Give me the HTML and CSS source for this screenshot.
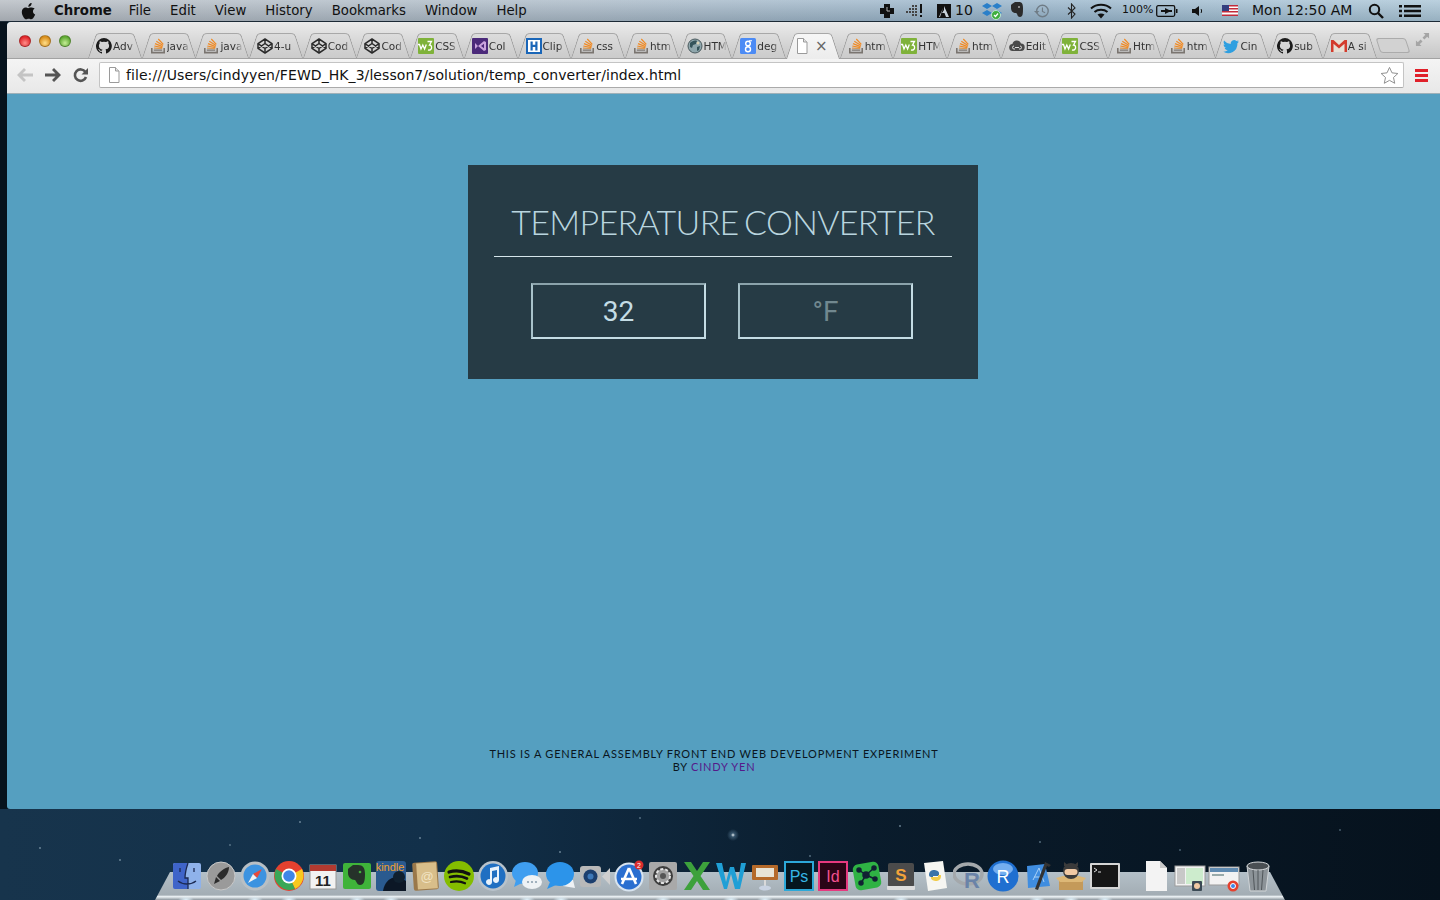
FILE: index.html
```html
<!DOCTYPE html>
<html lang="en">
<head>
    <meta charset="UTF-8">
    <title>Temperature Converter</title>
    <link rel="stylesheet" href="styles.css">
</head>
<body>
    <svg class="sprites" width="0" height="0">
        <symbol id="i-apple" viewBox="0 0 16 18"><path d="M11.6 1c.1 1.1-.3 2-.9 2.700-.6.7-1.500 1.200-2.400 1.100-.1-1 .4-2 .9-2.600C9.800 1.500 10.800 1 11.600 1zM14.700 6.500c-1.100.7-1.700 1.700-1.700 2.900 0 1.400.8 2.500 2.200 3.100-.4 1.100-.9 2.100-1.600 3.100-.7 1-1.400 1.700-2.400 1.700-.9 0-1.300-.6-2.500-.6s-1.700.6-2.500.6c-1 0-1.800-.9-2.500-1.900C2.500 13.800 1.800 11.900 1.800 10.100c0-3 1.900-4.600 3.800-4.600 1 0 1.900.7 2.500.7.600 0 1.600-.8 2.800-.7.900 0 2.600.3 3.800 1z"/></symbol>
        <symbol id="i-github" viewBox="0 0 16 16"><path fill="#1b1b1b" d="M8 0a8 8 0 0 0-2.500 15.600c.4.100.5-.2.500-.4v-1.400c-2.200.5-2.700-1-2.700-1-.4-.9-.9-1.200-.9-1.200-.7-.5.100-.5.100-.5.800.1 1.200.8 1.200.8.700 1.200 1.900.9 2.300.7.100-.5.300-.9.500-1.100-1.800-.2-3.600-.9-3.600-4 0-.9.300-1.600.8-2.100-.1-.2-.4-1 .1-2.100 0 0 .7-.2 2.200.8a7.600 7.600 0 0 1 4 0c1.500-1 2.200-.8 2.200-.8.400 1.100.2 1.900.1 2.100.5.600.8 1.300.8 2.100 0 3.100-1.900 3.700-3.700 3.900.3.300.6.700.6 1.500v2.200c0 .2.100.5.600.4A8 8 0 0 0 8 0z"/></symbol>
        <symbol id="i-so" viewBox="0 0 16 16"><path fill="#7a7570" d="M1 10h1.600v3.800h10.800V10H15v5.500H1z"/><path fill="#7a7570" d="M3.800 11.600h8.400v1.200H3.800z"/><g fill="none" stroke="#f08a24" stroke-width="1.200"><path stroke="#d69a58" d="M4 10.200l8.200.4"/><path d="M4.300 8l8 1.600"/><path d="M5 5.600l7.600 3"/><path d="M6.300 3.300l6.700 4.200"/><path d="M8.300 1l5 5.400"/></g></symbol>
        <symbol id="i-codepen" viewBox="0 0 16 16"><g fill="none" stroke="#2a2a2a" stroke-width="1.500" stroke-linejoin="round"><path d="M8 1l7 4.600v4.800L8 15l-7-4.600V5.600z"/><path d="M8 1v4.500M8 10.500V15M1 5.600L8 10.500l7-4.900M1 10.400L8 5.500l7 4.900"/></g></symbol>
        <symbol id="i-w3" viewBox="0 0 16 16"><rect width="16" height="16" rx="1" fill="#7fb23a"/><path fill="none" stroke="#fff" stroke-width="1.300" d="M0 6.500h1.500l1.500 4.500 1.800-4 1.800 4 1.700-4.500M9.500 3.500h4l-2 3.500c3 0 3 6-1.500 5"/></symbol>
        <symbol id="i-vs" viewBox="0 0 16 16"><rect width="16" height="16" rx="1" fill="#4b2a7a"/><path fill="#c9a3dd" d="M3 5l3 3-3 3V5zm3 3l6-5 2 1v8l-2 1-6-5zm6-2.200L9 8l3 2.200V5.800z"/></symbol>
        <symbol id="i-h" viewBox="0 0 16 16"><rect width="16" height="16" fill="#1a66b8"/><rect x="2" y="2" width="12" height="12" fill="#fff"/><path fill="#1a66b8" d="M4.500 3.500h2.200v3.300h2.600V3.500h2.200v9H9.300V8.900H6.700v3.600H4.500z"/></symbol>
        <symbol id="i-globe" viewBox="0 0 16 16"><circle cx="8" cy="8" r="7" fill="#8fa6ac" stroke="#4a5a5e"/><path fill="#34535a" d="M3 5c2-2 5-3 7-2l-1 3-3 1-1 3-2-1zM10 9l3-1-1 4-2 1z"/><circle cx="11" cy="5" r="1.500" fill="#d9d2b6"/></symbol>
        <symbol id="i-google" viewBox="0 0 16 16"><rect width="16" height="16" rx="1.500" fill="#4c8bf5"/><circle cx="8" cy="5.500" r="2.300" fill="none" stroke="#fff" stroke-width="1.400"/><circle cx="8" cy="11.300" r="2.500" fill="none" stroke="#fff" stroke-width="1.400"/><path fill="#fff" d="M9 2.200h3v1H9z"/></symbol>
        <symbol id="i-doc" viewBox="0 0 14 16"><path fill="#fff" stroke="#9a9a9a" d="M2.500.5h6l3.500 3.500v11.500H2.500z"/><path fill="#e3e3e3" stroke="#9a9a9a" d="M8.500.5V4H12"/></symbol>
        <symbol id="i-cloud" viewBox="0 0 16 16"><path fill="#4a4a4a" d="M4 13a3.500 3.500 0 0 1-.6-7A4.500 4.500 0 0 1 12 5.600 3.700 3.700 0 0 1 12 13z"/><path fill="none" stroke="#ddd" stroke-width="1" d="M6 9.500h4M5 8a1.500 1.500 0 0 0 0 3h1M11 8a1.500 1.500 0 0 1 0 3h-1"/></symbol>
        <symbol id="i-twitter" viewBox="0 0 16 16"><path fill="#2f9fe0" d="M16 3.500c-.6.300-1.200.4-1.900.5.700-.4 1.200-1 1.400-1.800-.6.400-1.300.6-2.100.8A3.300 3.300 0 0 0 7.800 6C5.100 5.900 2.700 4.600 1.100 2.600c-.9 1.500-.4 3.400 1 4.400-.5 0-1-.2-1.500-.4 0 1.600 1.100 3 2.600 3.300-.5.100-1 .2-1.500.1.400 1.300 1.600 2.200 3.100 2.300A6.600 6.600 0 0 1 0 13.600 9.300 9.300 0 0 0 14.400 5.300c.6-.5 1.200-1.100 1.600-1.800z"/></symbol>
        <symbol id="i-gmail" viewBox="0 0 16 16"><rect y="2" width="16" height="12" fill="#e6e0d6"/><path fill="#d33b2c" d="M0 2h2.500L8 7l5.500-5H16v12h-2.500V5.800L8 10.500 2.500 5.800V14H0z"/></symbol>
    </svg>

    <div class="menubar">
        <svg class="apple"><use href="#i-apple"/></svg>
        <nav class="menu">
            <span class="menu-app">Chrome</span>
            <span>File</span>
            <span>Edit</span>
            <span>View</span>
            <span>History</span>
            <span>Bookmarks</span>
            <span>Window</span>
            <span>Help</span>
        </nav>
        <div class="tray">
            <svg class="tray-icon tray-plus" viewBox="0 0 16 16"><path fill="#111" d="M5 1h6v4h4v6h-4v4H5v-4H1V5h4z"/><path stroke="#bbb" d="M8 4v4h3"/></svg>
            <svg class="tray-icon tray-grid" viewBox="0 0 20 16"><g fill="#444"><rect x="1" y="8" width="2" height="2"/><rect x="4" y="5" width="2" height="2"/><rect x="4" y="8" width="2" height="2"/><rect x="7" y="2" width="2" height="2"/><rect x="7" y="5" width="2" height="2"/><rect x="7" y="8" width="2" height="2"/><rect x="7" y="11" width="2" height="2"/><rect x="10" y="2" width="2" height="2"/><rect x="10" y="5" width="2" height="2"/><rect x="10" y="8" width="2" height="2"/><rect x="10" y="11" width="2" height="2"/></g><path fill="#111" d="M15 1h2v9h-2zM15 12h2v2h-2z"/></svg>
            <svg class="tray-icon tray-adobe" viewBox="0 0 16 16"><path fill="#111" d="M1 1h14v14H1z"/><path fill="#c8d2da" d="M8 3l5 11h-3L8.500 10H6L8 7zM3 14L7 5 4 14z"/></svg>
            <span class="tray-num">10</span>
            <svg class="tray-icon tray-dropbox" viewBox="0 0 20 18"><path fill="#2a7fc9" d="M5 1l5 3-5 3-5-3zM15 1l5 3-5 3-5-3zM5 8l5 3-5 3-5-3zM15 8l5 3-5 3-5-3z"/><circle cx="14" cy="13" r="4.500" fill="#3fae3f" stroke="#dfe" stroke-width=".7"/><path stroke="#fff" fill="none" stroke-width="1.200" d="M12 13l1.500 1.500 2.500-3"/></svg>
            <svg class="tray-icon tray-ever" viewBox="0 0 16 18"><path fill="#2b2b2b" d="M3 3l3-2h4c3 0 4 2 4 6 0 5 0 9-3 9-3 0-2-3-4-4-3 0-5-2-5-5V4z"/><circle cx="10" cy="6" r="1" fill="#aaa"/></svg>
            <svg class="tray-icon tray-clock" viewBox="0 0 18 18"><circle cx="9.500" cy="9" r="6.500" fill="none" stroke="#6f7c86" stroke-width="1.500"/><path fill="none" stroke="#6f7c86" stroke-width="1.300" d="M9.500 5v4.500l3 1.500"/><path fill="#6f7c86" d="M0 9h6l-3 3z"/></svg>
            <svg class="tray-icon tray-bt" viewBox="0 0 10 16"><path fill="none" stroke="#222" stroke-width="1.100" d="M1 4.500l7 6.500-3.500 4V1L8 5 1 11.500"/></svg>
            <svg class="tray-icon tray-wifi" viewBox="0 0 22 16"><g fill="none" stroke="#111" stroke-width="2"><path d="M1 5.500c5.500-5 14.500-5 20 0"/><path d="M4.500 9c3.500-3 9.500-3 13 0"/></g><path fill="#111" d="M7.500 11.500c2-1.500 5-1.500 7 0L11 15.500z"/></svg>
            <span class="tray-pct">100%</span>
            <svg class="tray-icon tray-batt" viewBox="0 0 22 12"><rect x=".7" y=".7" width="18" height="10.600" rx="1.500" fill="none" stroke="#111" stroke-width="1.300"/><rect x="20" y="4" width="1.500" height="4" fill="#111"/><path fill="#111" d="M5 5h4V3l4 2h3v2h-3l-4 2V7H5z"/></svg>
            <svg class="tray-icon tray-vol" viewBox="0 0 14 14"><path fill="#111" d="M1 5h3l4-3v10L4 9H1z"/><path fill="none" stroke="#111" d="M10 5c.8 1 .8 3 0 4"/></svg>
            <svg class="tray-icon tray-flag" viewBox="0 0 16 11"><rect width="16" height="11" fill="#fff"/><path fill="#c22b3a" d="M0 0h16v1.500H0zM0 3h16v1.500H0zM0 6h16v1.500H0zM0 9.500h16V11H0z"/><rect width="7" height="6" fill="#333e7e"/></svg>
            <span class="tray-time">Mon 12:50 AM</span>
            <svg class="tray-icon tray-search" viewBox="0 0 16 16"><circle cx="6.500" cy="6.500" r="4.700" fill="none" stroke="#111" stroke-width="2"/><path stroke="#111" stroke-width="2.400" d="M10 10l5 5"/></svg>
            <svg class="tray-icon tray-list" viewBox="0 0 22 14"><path fill="#111" d="M0 1h3v2.400H0zM5 1h17v2.400H5zM0 5.800h3v2.400H0zM5 5.800h17v2.400H5zM0 10.600h3V13H0zM5 10.600h17V13H5z"/></svg>
        </div>
    </div>

    <div class="desktop">
        <div class="window">
            <div class="tabstrip">
                <div class="lights">
                    <span class="light light-red"></span>
                    <span class="light light-yellow"></span>
                    <span class="light light-green"></span>
                </div>
                <div class="tabs">
                    <div class="tab"><svg class="fav"><use href="#i-github"/></svg><span class="tab-title">Adv</span></div>
                    <div class="tab"><svg class="fav"><use href="#i-so"/></svg><span class="tab-title">java</span></div>
                    <div class="tab"><svg class="fav"><use href="#i-so"/></svg><span class="tab-title">java</span></div>
                    <div class="tab"><svg class="fav"><use href="#i-codepen"/></svg><span class="tab-title">4-u</span></div>
                    <div class="tab"><svg class="fav"><use href="#i-codepen"/></svg><span class="tab-title">Cod</span></div>
                    <div class="tab"><svg class="fav"><use href="#i-codepen"/></svg><span class="tab-title">Cod</span></div>
                    <div class="tab"><svg class="fav"><use href="#i-w3"/></svg><span class="tab-title">CSS</span></div>
                    <div class="tab"><svg class="fav"><use href="#i-vs"/></svg><span class="tab-title">Col</span></div>
                    <div class="tab"><svg class="fav"><use href="#i-h"/></svg><span class="tab-title">Clip</span></div>
                    <div class="tab"><svg class="fav"><use href="#i-so"/></svg><span class="tab-title">css</span></div>
                    <div class="tab"><svg class="fav"><use href="#i-so"/></svg><span class="tab-title">htm</span></div>
                    <div class="tab"><svg class="fav"><use href="#i-globe"/></svg><span class="tab-title">HTM</span></div>
                    <div class="tab"><svg class="fav"><use href="#i-google"/></svg><span class="tab-title">deg</span></div>
                    <div class="tab tab-active"><svg class="fav"><use href="#i-doc"/></svg><span class="tab-close">×</span></div>
                    <div class="tab"><svg class="fav"><use href="#i-so"/></svg><span class="tab-title">htm</span></div>
                    <div class="tab"><svg class="fav"><use href="#i-w3"/></svg><span class="tab-title">HTM</span></div>
                    <div class="tab"><svg class="fav"><use href="#i-so"/></svg><span class="tab-title">htm</span></div>
                    <div class="tab"><svg class="fav"><use href="#i-cloud"/></svg><span class="tab-title">Edit</span></div>
                    <div class="tab"><svg class="fav"><use href="#i-w3"/></svg><span class="tab-title">CSS</span></div>
                    <div class="tab"><svg class="fav"><use href="#i-so"/></svg><span class="tab-title">Htm</span></div>
                    <div class="tab"><svg class="fav"><use href="#i-so"/></svg><span class="tab-title">htm</span></div>
                    <div class="tab"><svg class="fav"><use href="#i-twitter"/></svg><span class="tab-title">Cin</span></div>
                    <div class="tab"><svg class="fav"><use href="#i-github"/></svg><span class="tab-title">sub</span></div>
                    <div class="tab"><svg class="fav"><use href="#i-gmail"/></svg><span class="tab-title">A si</span></div>
                </div>
                <div class="tab-new"></div>
                <svg class="fullscreen" viewBox="0 0 16 16"><path fill="#a5a5a5" d="M9 1h6v6l-2-2-3 3-2-2 3-3zM7 15H1V9l2 2 3-3 2 2-3 3z"/></svg>
            </div>
            <div class="toolbar">
                <svg class="nav-btn nav-back" viewBox="0 0 18 16"><path fill="#c4c4c4" d="M8 1l2 2-3.500 3.500H17v3H6.500L10 13l-2 2-7-7z"/></svg>
                <svg class="nav-btn nav-fwd" viewBox="0 0 18 16"><path fill="#555" d="M10 1L8 3l3.500 3.500H1v3h10.500L8 13l2 2 7-7z"/></svg>
                <svg class="nav-btn nav-reload" viewBox="0 0 16 16"><path fill="none" stroke="#555" stroke-width="2.600" d="M13 10a5.700 5.700 0 1 1-.6-5"/><path fill="#555" d="M15 1v6.500H8.500z"/></svg>
                <div class="urlbar">
                    <svg class="url-doc"><use href="#i-doc"/></svg>
                    <span class="url-text">file:///Users/cindyyen/FEWD_HK_3/lesson7/solution/temp_converter/index.html</span>
                    <svg class="url-star" viewBox="0 0 20 20"><path fill="#fff" stroke="#8a8a8a" d="M10 1.500l2.600 5.700 6.200.7-4.600 4.200 1.300 6.100L10 15.100l-5.500 3.100 1.300-6.100L1.200 7.900l6.200-.7z"/></svg>
                </div>
                <div class="hamburger"><span></span><span></span><span></span></div>
            </div>
            <main class="page">
                <section class="converter">
                    <h1>Temperature Converter</h1>
                    <form class="converter-form">
                        <input type="text" value="32">
                        <input type="text" placeholder="°F">
                    </form>
                </section>
                <footer class="credit">
                    This is a General Assembly Front End Web Development Experiment<br>
                    by <a href="#">Cindy Yen</a>
                </footer>
            </main>
        </div>
    </div>

    <div class="dock">
        <div class="dock-icons">
            <svg viewBox="0 0 32 32"><rect x="2" y="3" width="28" height="26" rx="2" fill="#8fb2ea"/><path fill="#3f64c9" d="M2 5a2 2 0 0 1 2-2h13c-2 6-3 10-3 15h3v11H4a2 2 0 0 1-2-2z"/><path fill="none" stroke="#1c2a52" stroke-width="1.300" d="M17 3c-2 6-3 10-3 15h3v11M9 8v4M23 8v4M7 21c5 4 13 4 18 0"/></svg>
            <svg viewBox="0 0 32 32"><circle cx="16" cy="16" r="14" fill="#9a9a9a"/><circle cx="16" cy="16" r="14" fill="none" stroke="#c9c9c9"/><path fill="#2c2c2c" d="M24 7c0 6-4 11-8 13l-4-4c2-4 7-8 12-9zM11 17l4 4-6 3z"/></svg>
            <svg viewBox="0 0 32 32"><circle cx="16" cy="16" r="14.500" fill="#b8bfc4"/><circle cx="16" cy="16" r="11.500" fill="#3c93e0"/><path fill="#e8493a" d="M23 9l-9 5 4 4z"/><path fill="#f2f2f2" d="M9 23l9-5-4-4z"/></svg>
            <svg viewBox="0 0 32 32"><circle cx="16" cy="16" r="15" fill="#e5412f"/><path fill="#f9c81e" d="M16 16L29 9a15 15 0 0 1-7 20z"/><path fill="#3aa757" d="M16 16l6 13A15 15 0 0 1 3 9z"/><circle cx="16" cy="16" r="7.500" fill="#fff"/><circle cx="16" cy="16" r="5.800" fill="#3f86e8"/></svg>
            <svg viewBox="0 0 32 32"><rect x="3" y="5" width="26" height="24" fill="#f2f2f2" stroke="#999"/><path fill="#b23a30" d="M3 5h26v6H3z"/><text x="16" y="26" class="dock-cal">11</text></svg>
            <svg viewBox="0 0 32 32"><rect x="2" y="3" width="28" height="26" rx="2" fill="#3fb33a"/><path fill="#26322a" d="M8 8l4-3h5c5 0 7 3 7 9 0 7-1 11-5 11-3 0-3-3-5-5-4 0-7-3-7-7V9z"/><circle cx="19" cy="12" r="1.300" fill="#3fb33a"/></svg>
            <svg viewBox="0 0 32 32"><rect x="1" y="1" width="30" height="30" rx="3" fill="#2a5a8f"/><path fill="#0c1726" d="M8 31c1-6 4-11 9-13 5-2 10 0 14 3v10z"/><circle cx="24" cy="17" r="6" fill="#10202f"/><text x="15" y="11" class="dock-kindle">kindle</text></svg>
            <svg viewBox="0 0 32 32"><rect x="4" y="2" width="25" height="28" rx="2" fill="#9a784a" transform="rotate(-4 16 16)"/><rect x="8" y="3" width="20" height="26" fill="#d8be8a" transform="rotate(-4 16 16)"/><text x="18" y="21" class="dock-at">@</text></svg>
            <svg viewBox="0 0 32 32"><circle cx="16" cy="16" r="15" fill="#84bd00"/><g fill="none" stroke="#111" stroke-linecap="round"><path stroke-width="3.200" d="M6 12c7-2 14-1 20 2"/><path stroke-width="2.700" d="M7 17c6-1.500 12-1 17 1.500"/><path stroke-width="2.200" d="M8 22c5-1 10-.7 14 1.300"/></g></svg>
            <svg viewBox="0 0 32 32"><circle cx="16" cy="16" r="15" fill="#b9c3cb"/><circle cx="16" cy="16" r="12.500" fill="#1f6fc2"/><path fill="#e8f2fb" d="M13 8l9-2v14a3 3 0 1 1-2-2.800V10l-5 1v11a3 3 0 1 1-2-2.800z"/></svg>
            <svg viewBox="0 0 32 32"><ellipse cx="14" cy="13" rx="13" ry="11" fill="#3f9ef0"/><path fill="#3f9ef0" d="M5 20l-2 7 8-4z"/><ellipse cx="21" cy="22" rx="10" ry="7" fill="#eef2f5"/><circle cx="17" cy="22" r="1.100" fill="#8ea2b2"/><circle cx="21" cy="22" r="1.100" fill="#8ea2b2"/><circle cx="25" cy="22" r="1.100" fill="#8ea2b2"/></svg>
            <svg viewBox="0 0 32 32"><path fill="#eef2f5" d="M18 20h10l2 8-12-2z"/><ellipse cx="15" cy="14" rx="14" ry="12" fill="#2c94ea"/><path fill="#2c94ea" d="M5 22l-3 7 9-4z"/></svg>
            <svg viewBox="0 0 32 32"><rect x="1" y="6" width="21" height="21" rx="3" fill="#b9b9b9"/><circle cx="11.500" cy="16.500" r="7" fill="#1d3f6e"/><circle cx="11.500" cy="16.500" r="3" fill="#3e78b8"/><path fill="#cfcfcf" d="M23 16.500L31 8v17z"/></svg>
            <svg viewBox="0 0 32 32"><circle cx="16" cy="17" r="14.500" fill="#d8e4ef"/><circle cx="16" cy="17" r="12.500" fill="#2a6fd0"/><path fill="none" stroke="#fff" stroke-width="2.600" d="M16 8l-7 16M16 8l7 16M8 19h16"/><circle cx="26" cy="5" r="4.500" fill="#d92c2c"/><text x="26" y="7.500" class="dock-badge">2</text></svg>
            <svg viewBox="0 0 32 32"><rect x="2" y="2" width="28" height="28" rx="2" fill="#a9a9a9"/><circle cx="16" cy="16" r="10" fill="#3d3d3d"/><circle cx="16" cy="16" r="7" fill="#a0a0a0" stroke="#e4e4e4" stroke-width="2" stroke-dasharray="3 2"/><circle cx="16" cy="16" r="3" fill="#555"/></svg>
            <svg viewBox="0 0 32 32"><path fill="#3da13c" d="M3 2h7l6 9 6-9h7L19.500 16 29 30h-7l-6-9-6 9H3l9.500-14z"/></svg>
            <svg viewBox="0 0 32 32"><path fill="#1f9fd6" d="M1 3h6l4 19 4-15h4l4 15 3-19h5l-6 26h-5l-4-15-4 15H9z"/></svg>
            <svg viewBox="0 0 32 32"><rect x="3" y="5" width="26" height="15" rx="1" fill="#b56a2a"/><rect x="7" y="8" width="18" height="9" fill="#e8e4d6"/><path fill="#d9d9d9" d="M15 20h2v7h-2z"/><ellipse cx="16" cy="28" rx="6" ry="2.500" fill="#c9d3e2"/></svg>
            <svg viewBox="0 0 32 32"><rect x="2" y="2" width="28" height="28" fill="#05161f" stroke="#2ca8d8" stroke-width="2"/><text x="16" y="22" class="dock-ps">Ps</text></svg>
            <svg viewBox="0 0 32 32"><rect x="2" y="2" width="28" height="28" fill="#2a0416" stroke="#e5397f" stroke-width="2"/><text x="16" y="22" class="dock-id">Id</text></svg>
            <svg viewBox="0 0 32 32"><rect x="3" y="3" width="26" height="26" rx="5" fill="#2fb344" transform="rotate(-10 16 16)"/><g fill="#123" stroke="#123" stroke-width="1.500"><circle cx="15" cy="15" r="3"/><circle cx="8" cy="10" r="2"/><circle cx="23" cy="8" r="2"/><circle cx="24" cy="19" r="2"/><circle cx="10" cy="23" r="2"/><path d="M15 15L8 10M15 15l8-7M15 15l9 4M15 15L10 23"/></g></svg>
            <svg viewBox="0 0 32 32"><rect x="3" y="3" width="26" height="24" rx="2" fill="#4b4b4b"/><path fill="#ddd" d="M2 26h28v3a1 1 0 0 1-1 1H3a1 1 0 0 1-1-1z"/><text x="16" y="21" class="dock-s">S</text></svg>
            <svg viewBox="0 0 32 32"><path fill="#f6f6f2" d="M5 3l19 -2 4 27-19 3z"/><path fill="#3a74a8" d="M10 15c0-4 3-5 5-5s5 1 5 3v3h-6v1h-2c-1 0-2-1-2-2z"/><path fill="#f2cc4a" d="M22 16c0 4-3 5-5 5s-5-1-5-3v-1h7v-2h2c1 0 1 0 1 1z"/></svg>
            <svg viewBox="0 0 32 32"><ellipse cx="15" cy="14" rx="14" ry="10" fill="none" stroke="#a4a8ab" stroke-width="3.500"/><text x="19" y="28" class="dock-r">R</text></svg>
            <svg viewBox="0 0 32 32"><circle cx="16" cy="16" r="15.500" fill="#1f6fd0"/><ellipse cx="16" cy="9" rx="10" ry="6" fill="#74aef0"/><text x="16" y="23" class="dock-r2">R</text></svg>
            <svg viewBox="0 0 32 32"><path fill="#3f8de0" d="M6 6l18-2 5 22-22 2z"/><path fill="none" stroke="#a8d0f7" d="M12 20l6-12 5 14M13 17h9"/><path fill="#333" d="M24 2l6 3-2 2-2-1-9 24-3-1 9-24z"/></svg>
            <svg viewBox="0 0 32 32"><path fill="#c49a5a" d="M4 20h24v10H4z"/><path fill="#ddb877" d="M1 18l7-2h16l7 2-4 4H5z"/><circle cx="16" cy="11" r="8" fill="#3b3b3b"/><path fill="#3b3b3b" d="M9 2l5 4H9zM23 2l-5 4h5z"/><rect x="9.500" y="9" width="13" height="6" rx="3" fill="#f0c9a4"/></svg>
            <svg viewBox="0 0 32 32"><rect x="1" y="3" width="30" height="26" rx="1" fill="#d5d5d5"/><rect x="3" y="5" width="26" height="22" fill="#161616"/><path fill="none" stroke="#ddd" d="M5 8l3 2-3 2M9 12h3"/></svg>
            <span class="dock-sep"></span>
            <svg viewBox="0 0 32 32"><path fill="#f3f3f3" d="M6 1h14l7 7v23H6z"/><path fill="#c9c9c9" d="M20 1v7h7z"/></svg>
            <svg viewBox="0 0 32 32"><rect x="1" y="6" width="30" height="20" fill="#f2f2f2" stroke="#9b9b9b"/><rect x="3" y="8" width="8" height="16" fill="#c8c8c8"/><rect x="12" y="8" width="17" height="16" fill="#cdeccd"/><rect x="18" y="21" width="10" height="10" rx="1" fill="#3b4a55"/><circle cx="23" cy="26" r="3" fill="#f0c9a4"/></svg>
            <svg viewBox="0 0 32 32"><rect x="1" y="7" width="30" height="18" fill="#f2f2f2" stroke="#9b9b9b"/><rect x="2" y="8" width="28" height="4" fill="#5f8ab0"/><rect x="4" y="14" width="12" height="2" fill="#9aa"/><circle cx="25" cy="26" r="5.500" fill="#e5412f"/><circle cx="25" cy="26" r="2.500" fill="#3f86e8" stroke="#fff"/></svg>
            <svg viewBox="0 0 32 32"><path fill="#8c9398" stroke="#cfd3d6" d="M5 6h22l-3 25H8z"/><ellipse cx="16" cy="6" rx="11" ry="4" fill="#4a4f53" stroke="#d6d9db"/><path stroke="#50565a" d="M11 10l1.500 20M16 10v20M21 10l-1.500 20"/></svg>
        </div>
    </div>
</body>
</html>
```

FILE: styles.css
```css
* {
    box-sizing: border-box;
}

html, body {
    height: 100%;
}

body {
    margin: 0;
    overflow: hidden;
    position: relative;
    font-family: "DejaVu Sans", sans-serif;
    background-color: #0a1a28;
    background-image:
        radial-gradient(circle at 733px 835px, #e8f0f4 0, rgba(120,160,190,0.4) 2px, transparent 6px),
        radial-gradient(circle at 420px 838px, #8aa3b4 0, transparent 1.5px),
        radial-gradient(circle at 560px 852px, #8aa3b4 0, transparent 1.5px),
        radial-gradient(circle at 120px 860px, #8aa3b4 0, transparent 1.5px),
        radial-gradient(circle at 40px 848px, #8aa3b4 0, transparent 1.5px),
        radial-gradient(circle at 300px 822px, #8aa3b4 0, transparent 1.5px),
        radial-gradient(circle at 230px 845px, #6f8a9c 0, transparent 1.5px),
        radial-gradient(circle at 640px 818px, #6f8a9c 0, transparent 1.5px),
        radial-gradient(circle at 810px 856px, #6f8a9c 0, transparent 1.5px),
        radial-gradient(circle at 900px 826px, #8aa3b4 0, transparent 1.5px),
        radial-gradient(circle at 1040px 842px, #6f8a9c 0, transparent 1.5px),
        radial-gradient(circle at 1180px 850px, #5f7889 0, transparent 1.5px),
        radial-gradient(circle at 1340px 830px, #5f7889 0, transparent 1.5px),
        linear-gradient(90deg, #17344c 0%, #12304a 30%, #0a1c2c 60%, #06121d 100%);
}

.sprites {
    position: absolute;
}

/* menu bar */
.menubar {
    height: 22px;
    display: flex;
    align-items: center;
    padding-left: 20px;
    font-size: 13.3px;
    color: #111;
    background:
        linear-gradient(rgba(255,255,255,0.22), rgba(0,0,0,0.1)),
        linear-gradient(90deg, #b4bac1 0%, #a8b8c6 40%, #94b2c9 70%, #a8c4d6 100%);
    border-bottom: 1px solid #1c2a36;
}

.apple {
    width: 16px;
    height: 18px;
    fill: #111;
}

.menu {
    display: flex;
    gap: 19px;
    margin-left: 18px;
}

.menu-app {
    font-weight: bold;
    margin-right: -2px;
}

.tray {
    margin-left: auto;
    position: relative;
    height: 22px;
    width: 570px;
    font-size: 14px;
}

/* the status icons sit at fixed spots along the tray */
.tray > * {
    position: absolute;
}

.tray-icon {
    top: 3px;
    width: 16px;
    height: 16px;
}

.tray-plus { left: 9px; }
.tray-grid { left: 35px; width: 20px; }
.tray-adobe { left: 66px; }
.tray-num { left: 85px; top: 2px; }
.tray-dropbox { left: 112px; width: 20px; height: 18px; top: 2px; }
.tray-ever { left: 139px; height: 18px; top: 1px; }
.tray-clock { left: 164px; height: 18px; top: 2px; }
.tray-bt { left: 197px; width: 10px; }
.tray-wifi { left: 220px; width: 22px; }
.tray-pct { left: 252px; top: 3px; font-size: 11px; }
.tray-batt { left: 286px; top: 5px; width: 22px; height: 12px; }
.tray-vol { left: 321px; top: 4px; width: 14px; height: 14px; }
.tray-flag { left: 352px; top: 5px; height: 11px; }
.tray-time { left: 382px; top: 2px; white-space: nowrap; }
.tray-search { left: 498px; }
.tray-list { left: 529px; top: 4px; width: 22px; height: 14px; }

/* browser window */
.desktop {
    padding-left: 7px;
    background: #07131d;
}

.window {
    height: 787px;
    display: flex;
    flex-direction: column;
    border-radius: 4px 0 0 3px;
    overflow: hidden;
    background: #559fc0;
}

.tabstrip {
    height: 37px;
    flex: none;
    display: flex;
    align-items: flex-end;
    position: relative;
    padding-left: 12px;
    background: linear-gradient(#ebebeb, #c6c6c6);
    border-bottom: 1px solid #a2a2a2;
}

.lights {
    display: flex;
    gap: 8px;
    align-self: flex-start;
    margin-top: 13px;
}

.light {
    width: 12px;
    height: 12px;
    border-radius: 50%;
    border: 1px solid rgba(0,0,0,0.25);
}

.light-red { background: radial-gradient(circle at 50% 70%, #ff8f8a, #e0262a 70%); }
.light-yellow { background: radial-gradient(circle at 50% 70%, #ffdf8a, #d98e1c 70%); }
.light-green { background: radial-gradient(circle at 50% 70%, #c6ee96, #5ea832 70%); }

.tabs {
    display: flex;
    margin-left: 17px;
}

.tab {
    width: 53.7px;
    height: 26px;
    display: flex;
    align-items: center;
    gap: 1px;
    padding-left: 8px;
    position: relative;
    isolation: isolate;
    font-size: 10.5px;
    color: #333;
    margin-bottom: -1px;
}

.tab::before, .tab::after {
    content: "";
    position: absolute;
    top: 0;
    bottom: 1px;
    width: 50%;
    z-index: -1;
    border-top: 1px solid #a8a8a8;
    background: linear-gradient(#dcdcdc, #cbcbcb);
}

.tab::before {
    left: 0;
    border-left: 1px solid #9a9a9a;
    border-radius: 4px 0 0 0;
    transform: skewX(-18deg);
    transform-origin: bottom left;
}

.tab::after {
    right: 0;
    border-right: 1px solid #9a9a9a;
    border-radius: 0 4px 0 0;
    transform: skewX(18deg);
    transform-origin: bottom right;
}

.tab-active {
    z-index: 1;
}

.tab-active::before, .tab-active::after {
    bottom: 0;
    background: linear-gradient(#f6f6f6, #ececec);
}

.fav {
    width: 16px;
    height: 16px;
    flex: none;
}

.tab-title {
    width: 24px;
    white-space: nowrap;
    -webkit-mask-image: linear-gradient(90deg, #000 65%, transparent 95%);
    mask-image: linear-gradient(90deg, #000 65%, transparent 95%);
}

.tab-close {
    margin-left: 4px;
    font-size: 15px;
    color: #666;
}

.tab-new {
    width: 30px;
    height: 15px;
    margin-left: 1px;
    margin-bottom: 5px;
    border: 1px solid #ababab;
    border-radius: 3px;
    background: #d2d2d2;
    transform: skewX(18deg);
}

.fullscreen {
    position: absolute;
    top: 10px;
    right: 10px;
    width: 15px;
    height: 15px;
}

.toolbar {
    height: 35px;
    flex: none;
    display: flex;
    align-items: center;
    padding: 0 12px 2px 9px;
    background: linear-gradient(#f4f4f4, #e8e8e8);
    border-bottom: 1px solid #9eb0b8;
}

.nav-btn {
    width: 18px;
    height: 16px;
    flex: none;
}

.nav-fwd {
    margin-left: 10px;
}

.nav-reload {
    margin-left: 11px;
    width: 16px;
}

.urlbar {
    flex: 1;
    height: 26px;
    margin-left: 10px;
    display: flex;
    align-items: center;
    padding: 0 4px 0 7px;
    background: #fff;
    border: 1px solid #c4c4c4;
    border-bottom-color: #aaa;
    border-radius: 2px;
}

.url-doc {
    width: 14px;
    height: 16px;
    flex: none;
}

.url-text {
    margin-left: 5px;
    font-size: 14px;
    letter-spacing: 0.07px;
    color: #111;
    white-space: nowrap;
}

.url-star {
    margin-left: auto;
    width: 19px;
    height: 19px;
}

.hamburger {
    margin-left: 11px;
    width: 13px;
    display: flex;
    flex-direction: column;
    gap: 2px;
}

.hamburger span {
    height: 3px;
    background: #e0202a;
}

/* the page itself */
.page {
    flex: 1;
    display: flex;
    flex-direction: column;
    align-items: center;
    padding: 71px 1px 0 0;
    font-family: Lato, sans-serif;
}

.converter {
    width: 510px;
    height: 214px;
    padding: 26px 26px 0;
    background: #263b45;
}

h1 {
    margin: 0;
    height: 66px;
    font-size: 34px;
    line-height: 62px;
    font-weight: 300;
    letter-spacing: -0.7px;
    word-spacing: -3px;
    text-align: center;
    text-transform: uppercase;
    color: #b9d5df;
    border-bottom: 1px solid #d5e5ea;
}

.converter-form {
    display: flex;
    justify-content: center;
    gap: 32px;
    margin: 26px 2px 0 0;
}

.converter-form input {
    width: 175px;
    height: 56px;
    background: transparent;
    border: 2px solid;
    border-color: #8ba3ab #c4dce4 #c4dce4 #a8c2ca;
    border-radius: 0;
    font-family: Roboto, sans-serif;
    font-size: 28px;
    text-align: center;
    color: #c4dde6;
    outline: none;
}

.converter-form input::placeholder {
    color: #71888f;
}

.credit {
    margin-top: auto;
    margin-bottom: 36px;
    padding-right: 18px;
    font-size: 11px;
    line-height: 13px;
    letter-spacing: 0.78px;
    text-align: center;
    text-transform: uppercase;
    color: #0a1620;
}

.credit a {
    color: #551a8b;
    text-decoration: none;
}

/* dock */
.dock {
    position: absolute;
    left: 155px;
    bottom: 0;
    width: 1130px;
    height: 40px;
}

.dock::before {
    content: "";
    position: absolute;
    left: 0;
    right: 0;
    bottom: 0;
    height: 28px;
    clip-path: polygon(15px 0, calc(100% - 15px) 0, 100% 100%, 0 100%);
    background: linear-gradient(#b4c0c8, #a3adb4 82%, #eef3f6 88%, #8a949b);
}

/* glow under the apps that are running */
.dock::after {
    content: "";
    position: absolute;
    left: 0;
    right: 0;
    bottom: 0;
    height: 5px;
    background:
        radial-gradient(ellipse 8px 4px at 31px 100%, #e4f6ff, transparent),
        radial-gradient(ellipse 8px 4px at 100px 100%, #e4f6ff, transparent),
        radial-gradient(ellipse 8px 4px at 134px 100%, #e4f6ff, transparent),
        radial-gradient(ellipse 8px 4px at 202px 100%, #e4f6ff, transparent),
        radial-gradient(ellipse 8px 4px at 236px 100%, #e4f6ff, transparent),
        radial-gradient(ellipse 8px 4px at 372px 100%, #e4f6ff, transparent),
        radial-gradient(ellipse 8px 4px at 406px 100%, #e4f6ff, transparent),
        radial-gradient(ellipse 8px 4px at 508px 100%, #e4f6ff, transparent),
        radial-gradient(ellipse 8px 4px at 576px 100%, #e4f6ff, transparent),
        radial-gradient(ellipse 8px 4px at 610px 100%, #e4f6ff, transparent),
        radial-gradient(ellipse 8px 4px at 746px 100%, #e4f6ff, transparent),
        radial-gradient(ellipse 8px 4px at 882px 100%, #e4f6ff, transparent),
        radial-gradient(ellipse 8px 4px at 916px 100%, #e4f6ff, transparent),
        radial-gradient(ellipse 8px 4px at 950px 100%, #e4f6ff, transparent);
}

.dock-icons {
    position: relative;
    z-index: 1;
    display: flex;
    gap: 2px;
    padding: 0 0 0 16px;
}

.dock-icons svg {
    width: 32px;
    height: 32px;
    flex: none;
}

.dock-sep {
    width: 15px;
    flex: none;
}

.dock-icons text {
    text-anchor: middle;
    font-family: "Liberation Sans", sans-serif;
}

.dock-cal { font-size: 15px; font-weight: bold; fill: #222; }
.dock-kindle { font-size: 11px; fill: #f0a030; }
.dock-at { font-size: 13px; fill: #f1e3c2; }
.dock-badge { font-size: 7px; fill: #fff; }
.dock-ps { font-size: 16px; fill: #36b6e6; }
.dock-id { font-size: 16px; fill: #f0508f; }
.dock-s { font-size: 17px; font-weight: bold; fill: #f2a33a; }
.dock-r { font-size: 22px; font-weight: bold; fill: #6a83a8; }
.dock-r2 { font-size: 18px; fill: #fff; font-family: "Liberation Serif", serif; }
```
